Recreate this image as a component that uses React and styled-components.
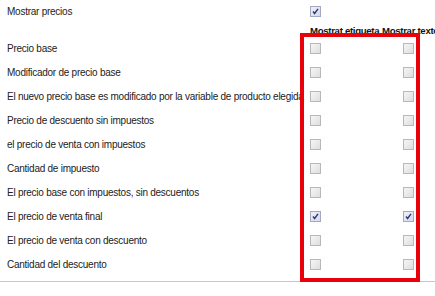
import React from 'react'
import styled, { createGlobalStyle } from 'styled-components'

// -- GLOBAL -- //
const GlobalStyle = createGlobalStyle`
    html, body {
        margin: 0;
        padding: 0;
        background: #fff;
    }
    body {
        font-family: "Liberation Sans", Arial, sans-serif;
        font-size: 10px;
        letter-spacing: -0.25px;
        color: #222;
    }
`;

// -- STYLED COMPONENTS -- //
const Page = styled.div`
    position: relative;
    width: 435px;
    height: 296px;
    overflow: hidden;
`;
const Table = styled.div`
    display: grid;
    grid-template-columns: 303px 72px 140px;
    width: 522px;
    padding-left: 7px;
    padding-bottom: 5px;
    border-bottom: 1px solid #c8c8c8;
`;
const Cell = styled.div`
    display: flex;
    align-items: center;
    height: ${p => p.h || 24}px;
    white-space: nowrap;
    padding-left: ${p => p.pl || 0}px;
`;
const HeadCell = styled.div`
    box-sizing: border-box;
    height: 14px;
    padding-top: 3px;
    line-height: 11px;
    white-space: nowrap;
    font-weight: bold;
    font-size: 9.6px;
    color: #111;
    letter-spacing: -0.3px;
`;
const Box = styled.span`
    display: inline-block;
    position: relative;
    width: 9px;
    height: 9px;
    border: 1px solid #b8b8b8;
    background: linear-gradient(135deg, #f6f6f6 0%, #dedede 100%);
    box-sizing: content-box;

    &.checked {
        border-color: #a4a8c0;
        background: linear-gradient(135deg, #eef0f8 0%, #d6d9ea 100%);
    }
`;
const Highlight = styled.div`
    position: absolute;
    left: 300px;
    top: 33px;
    width: 120px;
    height: 249px;
    border: 4px solid #e8000b;
    box-sizing: border-box;
    pointer-events: none;
`;

// -- COMPONENTS -- //
function Check({ checked }) {
    return (
        <Box className={checked ? 'checked' : ''}>
            {checked && (
                <svg width="9" height="9" viewBox="0 0 9 9" style={{ position: 'absolute', left: 0, top: 0 }}>
                    <path d="M2 4.5 L3.6 6.5 L7 1.8" fill="none" stroke="#2b3a78" strokeWidth="1.4" />
                </svg>
            )}
        </Box>
    )
}

const rows = [
    ['Precio base', false],
    ['Modificador de precio base', false],
    ['El nuevo precio base es modificado por la variable de producto elegida', false],
    ['Precio de descuento sin impuestos', false],
    ['el precio de venta con impuestos', false],
    ['Cantidad de impuesto', false],
    ['El precio base con impuestos, sin descuentos', false],
    ['El precio de venta final', true],
    ['El precio de venta con descuento', false],
    ['Cantidad del descuento', false],
]

function App() {
    return (
        <Page>
            <GlobalStyle />
            <Table>
                <Cell h={22}>Mostrar precios</Cell>
                <Cell h={22}><Check checked /></Cell>
                <Cell h={22} />

                <Cell h={14} />
                <HeadCell>Mostrat etiqueta</HeadCell>
                <HeadCell>Mostrar texto</HeadCell>

                {rows.map(([label, on]) => (
                    <React.Fragment key={label}>
                        <Cell>{label}</Cell>
                        <Cell><Check checked={on} /></Cell>
                        <Cell pl={21}><Check checked={on} /></Cell>
                    </React.Fragment>
                ))}
            </Table>
            <Highlight />
        </Page>
    )
}

// -- EXPORTS -- //
export default App
